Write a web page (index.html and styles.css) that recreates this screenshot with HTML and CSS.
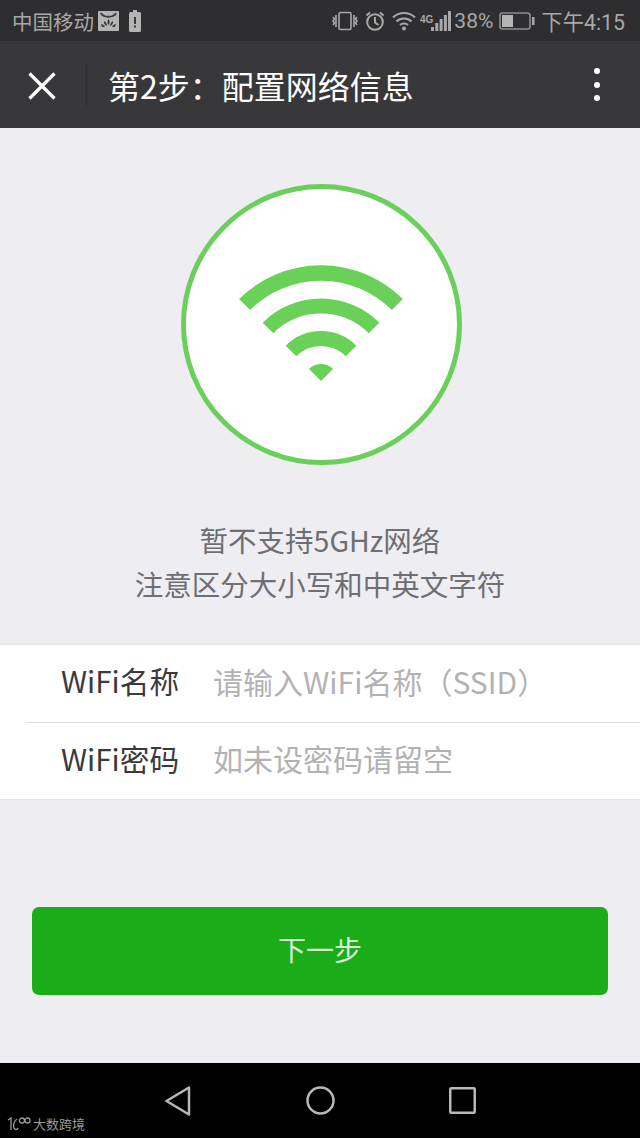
FILE: index.html
```html
<!DOCTYPE html>
<html lang="zh-CN">
<head>
  <meta charset="UTF-8">
  <meta name="viewport" content="width=device-width, initial-scale=1.0">
  <title>配置网络信息</title>
  <link rel="stylesheet" href="styles.css">
</head>
<body>
  <!-- Status bar -->
  <div class="statusbar">
    <div class="status-left">
      <span class="carrier">中国移动</span>
      <svg class="ic-app" viewBox="0 0 21 20" width="21" height="20">
        <rect width="21" height="20" rx="1" fill="#b4b4b4"/>
        <path d="M3 2c2 5 13 5 15 0" fill="none" stroke="#3a3a3c" stroke-width="2"/>
        <path d="M10.500 8c1.500 2 1.500 4 0 6-1.500-2-1.500-4 0-6zM6 10c2 1 3 3 3 5-2-.5-3.500-2.500-3-5zM15 10c-2 1-3 3-3 5 2-.5 3.500-2.500 3-5zM3 13c1.500 0 3 1 4 3H4zM18 13c-1.500 0-3 1-4 3h3z" fill="#3a3a3c"/>
      </svg>
      <svg class="ic-batt-alert" viewBox="0 0 12 22" width="12" height="22">
        <path d="M4 0h4v2h2.500q1.500 0 1.500 1.500V20.500q0 1.500-1.500 1.500h-9Q0 22 0 20.500V3.500Q0 2 1.500 2H4z" fill="#b4b4b4"/>
        <rect x="5" y="7" width="2" height="7" fill="#38383a"/>
        <rect x="5" y="15.500" width="2" height="2" fill="#38383a"/>
      </svg>
    </div>
    <div class="status-right">
      <svg viewBox="0 0 26 20" width="26" height="20" fill="none" stroke="#a8a8a8" stroke-width="1.600">
        <rect x="7" y="1.500" width="12" height="17" rx="1.500"/>
        <path d="M4 4v12M1 6l1.500 2L1 10l1.500 2L1 14M22 4v12M25 6l-1.500 2 1.500 2-1.500 2 1.500 2"/>
      </svg>
      <svg class="ic-gap" viewBox="0 0 20 20" width="20" height="20" fill="none" stroke="#a8a8a8" stroke-width="2">
        <circle cx="10" cy="11" r="7.800"/>
        <path d="M10 6v5.500l3.500 2.500M1.500 4.500 5 1.500M18.500 4.500 15 1.500"/>
      </svg>
      <svg class="ic-gap" viewBox="0 0 24 20" width="24" height="20" fill="none" stroke="#a8a8a8" stroke-width="2">
        <path d="M1 6.500c6-6 16-6 22 0M4.500 10.500c4-4 11-4 15 0M8 14c2-2 6-2 8 0"/>
        <circle cx="12" cy="17.500" r="2" fill="#a8a8a8" stroke="none"/>
      </svg>
      <span class="net-type">4G</span>
      <svg class="ic-signal" viewBox="0 0 20 20" width="20" height="20" fill="#a8a8a8">
        <rect x="0" y="16" width="3" height="4"/>
        <rect x="4.300" y="12" width="3" height="8"/>
        <rect x="8.600" y="8" width="3" height="12"/>
        <rect x="12.900" y="4" width="3" height="16"/>
        <rect x="17" y="0" width="3" height="20"/>
      </svg>
      <span class="batt-pct">38%</span>
      <svg class="ic-batt" viewBox="0 0 36 18" width="36" height="18">
        <rect x="1" y="1" width="30" height="16" rx="2.500" fill="none" stroke="#8e8e8e" stroke-width="1.600"/>
        <rect x="3" y="3" width="11" height="12" fill="#b4b4b4"/>
        <rect x="33" y="5" width="2.500" height="8" fill="#a8a8a8"/>
      </svg>
      <span class="clock">下午4:15</span>
    </div>
  </div>

  <!-- Navbar -->
  <div class="navbar">
    <button class="nav-close" aria-label="关闭">
      <svg viewBox="0 0 28 28" width="28" height="28" fill="none" stroke="#fff" stroke-width="3.200">
        <path d="M1.500 1.500 26.500 26.500M26.500 1.500 1.500 26.500"/>
      </svg>
    </button>
    <div class="nav-title">第2步：配置网络信息</div>
    <div class="nav-more"><i></i><i></i><i></i></div>
  </div>

  <!-- Main -->
  <section class="content">
    <div class="wifi-circle">
      <svg viewBox="-100 -120 200 130" width="200" height="130" fill="none" stroke="#69d158">
        <path stroke-width="15.500" d="M-76.400 -76.400A108 108 0 0 1 76.400 -76.400"/>
        <path stroke-width="15" d="M-53 -53A75 75 0 0 1 53 -53"/>
        <path stroke-width="15" d="M-30 -30A42.500 42.500 0 0 1 30 -30"/>
        <path stroke="none" fill="#69d158" d="M-12 -12A17 17 0 0 1 12 -12L0 0Z"/>
      </svg>
    </div>
    <div class="tips">
      <p>暂不支持5GHz网络</p>
      <p>注意区分大小写和中英文字符</p>
    </div>

    <div class="form">
      <div class="row">
        <span class="row-label">WiFi名称</span>
        <span class="row-hint">请输入WiFi名称（SSID）</span>
      </div>
      <div class="row">
        <span class="row-label">WiFi密码</span>
        <span class="row-hint">如未设密码请留空</span>
      </div>
    </div>

    <button class="next-btn">下一步</button>
  </section>

  <!-- Android nav keys -->
  <div class="keys">
    <svg viewBox="0 0 26 30" width="26" height="30" fill="none" stroke="#b8b8b8" stroke-width="2.500" stroke-linejoin="round">
      <path d="M24 1.500 1.500 15 24 28.500Z"/>
    </svg>
    <svg viewBox="0 0 29 29" width="29" height="29" fill="none" stroke="#b8b8b8" stroke-width="2.500">
      <circle cx="14.500" cy="14.500" r="13"/>
    </svg>
    <svg viewBox="0 0 27 27" width="27" height="27" fill="none" stroke="#b8b8b8" stroke-width="2.500">
      <rect x="1.250" y="1.250" width="24.500" height="24.500" rx="1"/>
    </svg>
    <div class="watermark">
      <svg viewBox="0 0 24 14" width="24" height="14" fill="none" stroke="#9a9a9a" stroke-width="1.300">
        <path d="M1 3 4 1v12M10 2c-3 2-4 6-3 9 1 2 3 2 4 0"/>
        <circle cx="15" cy="3.500" r="2.500"/>
        <circle cx="20.500" cy="3.500" r="2.500"/>
      </svg>
      <span>大数跨境</span>
    </div>
  </div>
</body>
</html>
```

FILE: styles.css
```css
/* General */
body {
  margin: 0;
  padding: 0;
  height: 1138px;
  overflow: hidden;
  display: flex;
  flex-direction: column;
  background: #eeeef2;
  font-family: "Liberation Sans", "Noto Sans CJK SC", sans-serif;
}

/* Status bar */
.statusbar {
  height: 41px;
  flex: none;
  display: flex;
  justify-content: space-between;
  align-items: center;
  padding: 0 15px 0 12px;
  background: #2e2d30;
  color: #a8a8a8;
  font-size: 20px;
}

.status-left,
.status-right {
  display: flex;
  align-items: center;
}

.carrier {
  font-family: "Noto Sans CJK SC", sans-serif;
  font-size: 20.500px;
  line-height: 24px;
}

.ic-app {
  margin-left: 4px;
}

.ic-batt-alert {
  margin-left: 10px;
}

.ic-gap {
  margin-left: 7px;
}

.net-type {
  align-self: flex-start;
  margin: 9px 0 0 4px;
  font-size: 10px;
  font-weight: bold;
}

.ic-signal {
  margin-left: -2px;
}

.batt-pct {
  margin-left: 3px;
  font-family: Roboto, sans-serif;
  font-size: 21px;
}

.ic-batt {
  margin-left: 6px;
}

.clock {
  margin-left: 6px;
  font-family: Roboto, "Noto Sans CJK SC", sans-serif;
  font-size: 21.300px;
}

/* Navbar */
.navbar {
  height: 87px;
  flex: none;
  display: flex;
  align-items: center;
  background: #38383a;
  color: #fff;
}

.nav-close {
  width: 87px;
  height: 44px;
  flex: none;
  padding: 5px 2px 0 0;
  background: none;
  border: 0;
  border-right: 1px solid #2f2f31;
}

.nav-title {
  flex: 1;
  margin-left: 21px;
  font-family: "Noto Sans CJK SC", sans-serif;
  font-size: 32px;
  line-height: 44px;
}

.nav-more {
  display: flex;
  flex-direction: column;
  gap: 7.500px;
  margin-right: 40px;
}

.nav-more i {
  width: 6px;
  height: 6px;
  border-radius: 50%;
  background: #fff;
}

/* Main */
.content {
  flex: 1;
  display: flex;
  flex-direction: column;
  align-items: center;
  padding-top: 56px;
}

.wifi-circle {
  width: 271px;
  height: 271px;
  margin-left: 2px;
  display: flex;
  justify-content: center;
  align-items: flex-start;
  background: #fff;
  border: 5px solid #6bcf5b;
  border-radius: 50%;
}

.wifi-circle svg {
  margin-top: 72px;
}

.tips {
  margin-top: 53px;
  text-align: center;
  color: #6f6f72;
  font-family: "Noto Sans CJK SC", sans-serif;
  font-size: 28.500px;
  line-height: 44px;
}

.tips p {
  margin: 0;
}

/* Form */
.form {
  width: 100%;
  margin-top: 38px;
  background: #fff;
  border-top: 1px solid #e6e6e8;
  border-bottom: 1px solid #e2e2e4;
}

.row {
  height: 71px;
  display: flex;
  align-items: center;
  padding: 0 0 6px 61px;
  font-family: "Noto Sans CJK SC", sans-serif;
  font-size: 29.700px;
}

.row + .row {
  height: 70px;
  margin-left: 27px;
  padding-left: 34px;
  border-top: 1px solid #dcdcde;
}

.row-label {
  width: 153px;
  flex: none;
  color: #3a3a3c;
}

.row-hint {
  margin-left: -1px;
  color: #b2b2b4;
  font-size: 30px;
}

/* Button */
.next-btn {
  width: 576px;
  height: 88px;
  margin-top: 107px;
  padding: 0 0 4px;
  background: #1aad19;
  border: 0;
  border-radius: 7px;
  color: #d8f0d8;
  font-family: "Noto Sans CJK SC", sans-serif;
  font-size: 28px;
}

/* Android keys */
.keys {
  position: relative;
  height: 75px;
  flex: none;
  display: flex;
  justify-content: center;
  align-items: center;
  gap: 114.500px;
  padding-left: 1px;
  background: #000;
}

.watermark {
  position: absolute;
  left: 7px;
  bottom: 5px;
  display: flex;
  align-items: center;
  gap: 2px;
  color: #9a9a9a;
  font-family: "Noto Sans CJK SC", sans-serif;
  font-size: 13px;
}
```
